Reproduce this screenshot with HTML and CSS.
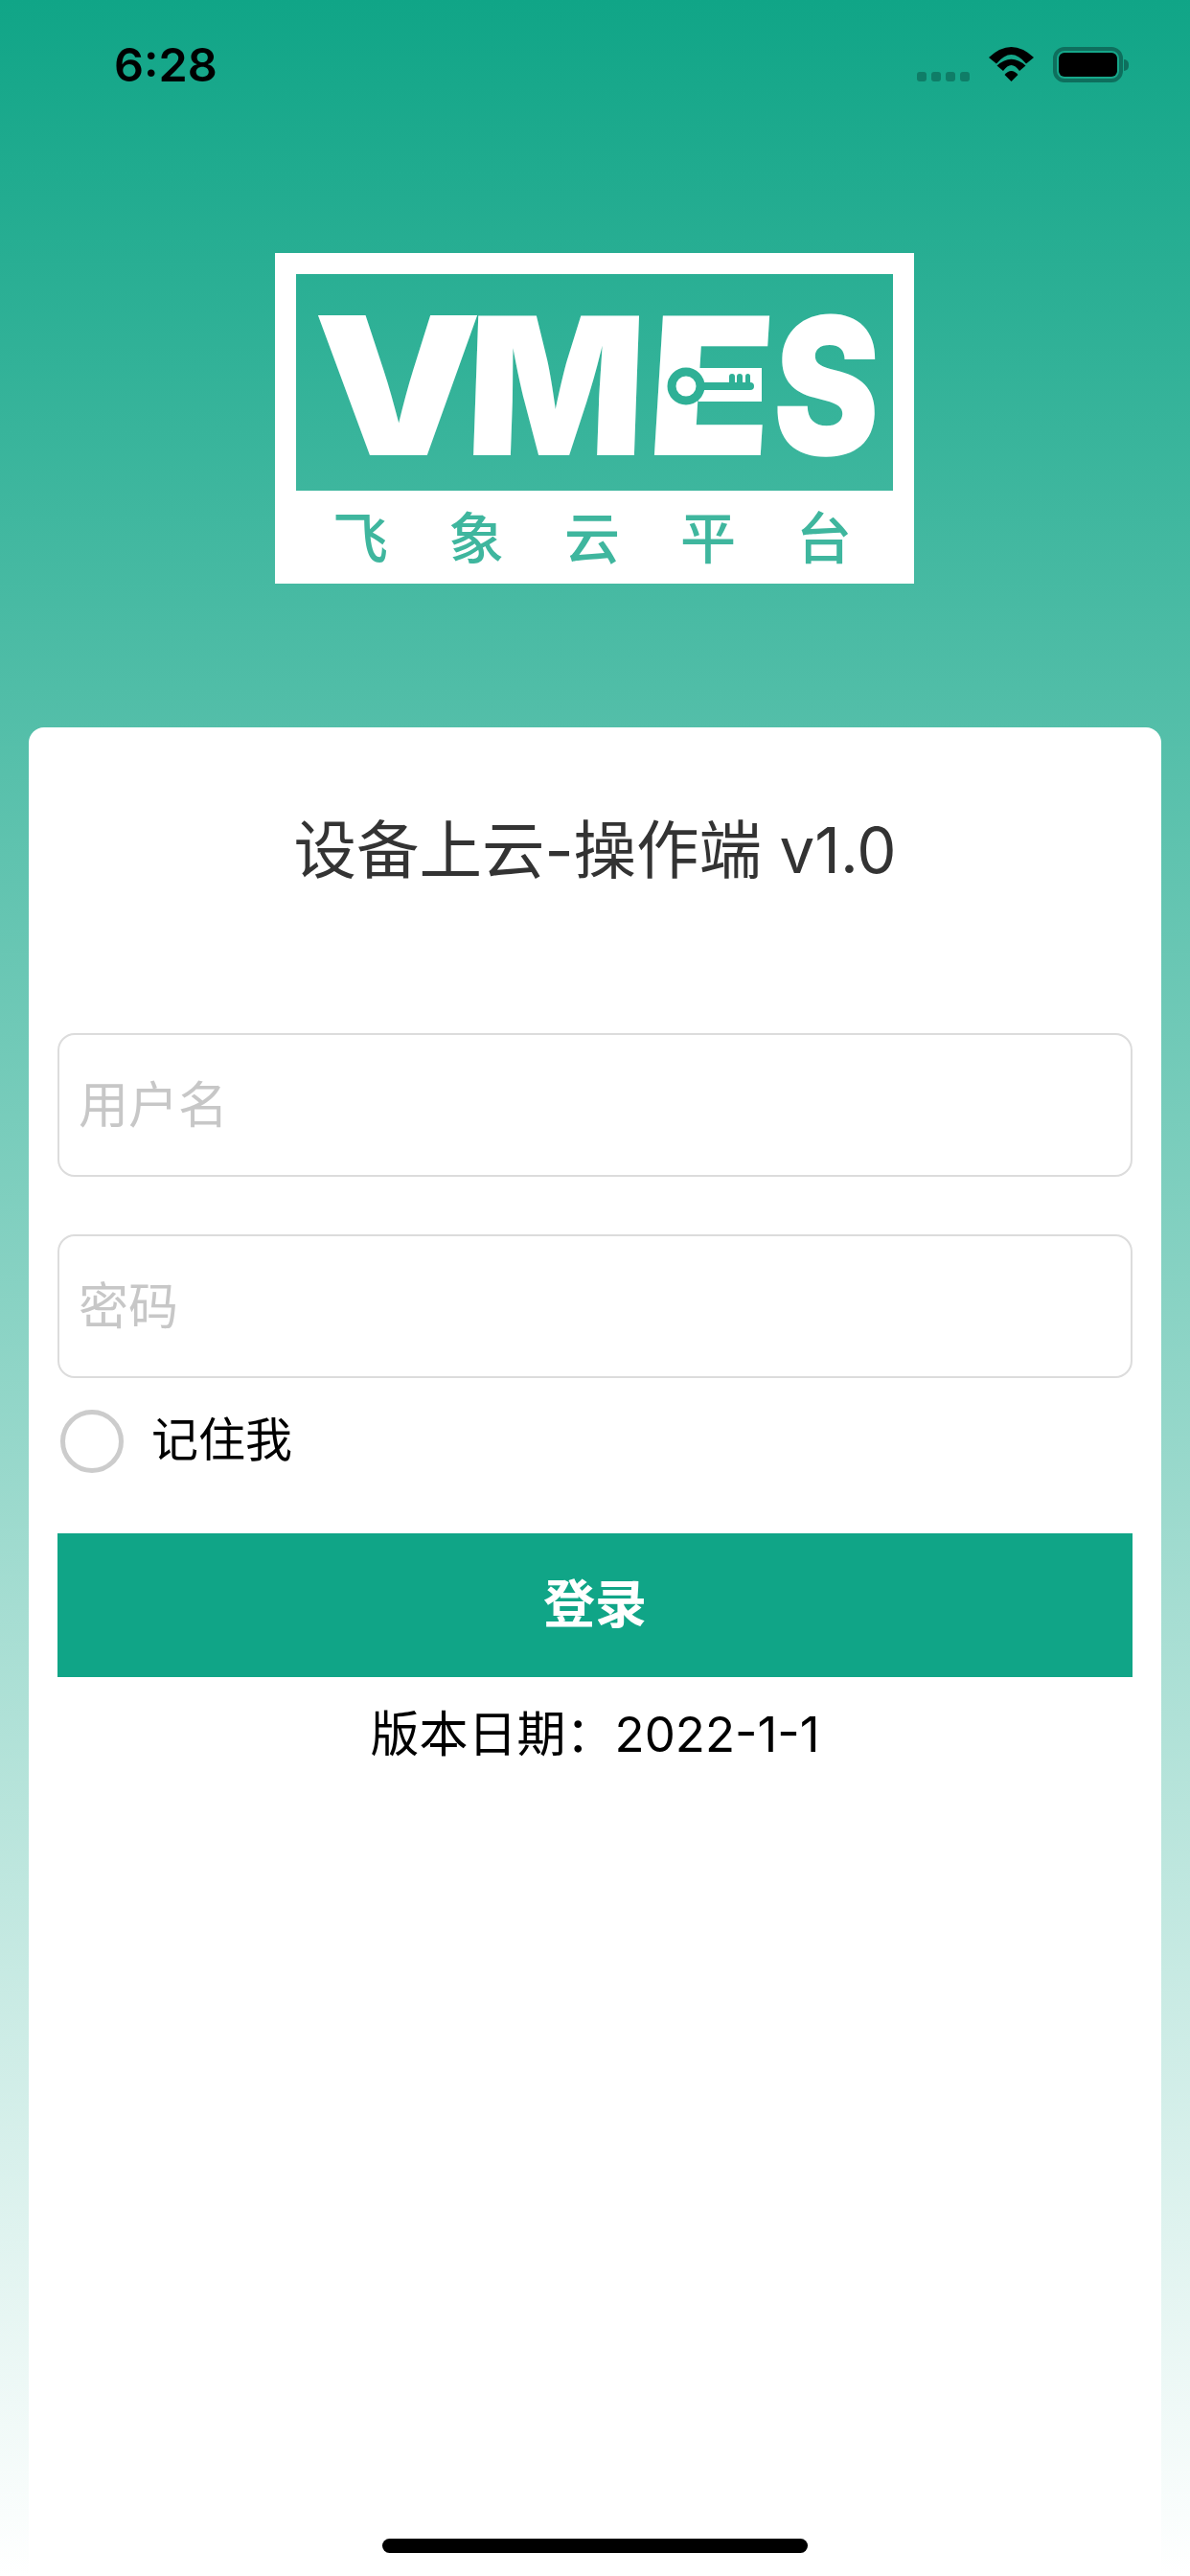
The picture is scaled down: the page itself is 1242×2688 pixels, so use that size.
FILE: index.html
```html
<!DOCTYPE html>
<html lang="zh-CN">
<head>
  <meta charset="UTF-8">
  <title>设备上云-操作端</title>
  <meta name="viewport" content="width=device-width, initial-scale=1.0">
  <link rel="stylesheet" href="styles.css">
</head>
<body>
  <!-- status bar -->
  <div class="status-bar">
    <span class="status-time">6:28</span>
    <div class="status-icons">
      <div class="signal"><i></i><i></i><i></i><i></i></div>
      <svg class="wifi" width="47" height="36" viewBox="0 0 47 36">
        <path d="M0 11Q23.5 -11 47 11L39 17.5Q23.5 -1.5 8 17.5Z"/>
        <path d="M8.5 19.5Q23.5 6 38.5 19.5L32 25Q23.5 13 15 25Z"/>
        <path d="M16.5 29Q23.5 21 30.5 29L23.5 36Z"/>
      </svg>
      <div class="battery"><div class="battery-level"></div></div>
      <div class="battery-nub"></div>
    </div>
  </div>

  <!-- logo -->
  <div class="logo">
    <svg class="logo-mark" width="623" height="226" viewBox="0 0 623 226">
      <text class="logo-letter" x="18" y="189" textLength="176" lengthAdjust="spacingAndGlyphs">V</text>
      <text class="logo-letter" transform="translate(176 189) skewX(-2)" textLength="186" lengthAdjust="spacingAndGlyphs">M</text>
      <text class="logo-letter" transform="translate(364 189) skewX(-3.5)" textLength="130" lengthAdjust="spacingAndGlyphs">E</text>
      <text class="logo-letter" transform="translate(496 189) skewX(-2)" textLength="111" lengthAdjust="spacingAndGlyphs">S</text>
      <!-- key in the middle arm of the E -->
      <rect x="420" y="98" width="66" height="35" fill="#fff"/>
      <g class="logo-key">
        <circle cx="407" cy="117" r="15" fill="#fff" stroke-width="9"/>
        <path d="M423 113H474Q478 113 478 117Q478 121 474 121H423Z"/>
        <rect x="452" y="104" width="6" height="12" rx="3"/>
        <rect x="460" y="104" width="6" height="12" rx="3"/>
        <rect x="469" y="104" width="5" height="12" rx="2.5"/>
      </g>
    </svg>
    <div class="logo-name">
      <span>飞</span><span>象</span><span>云</span><span>平</span><span>台</span>
    </div>
  </div>

  <!-- login card -->
  <div class="card">
    <h1>设备上云-操作端 v1.0</h1>
    <form class="login-form">
      <input type="text" placeholder="用户名">
      <input type="password" placeholder="密码">
      <label class="remember">
        <input type="radio" name="remember">
        <span class="remember-text">记住我</span>
      </label>
      <button type="button">登录</button>
    </form>
    <div class="version">版本日期：2022-1-1</div>
  </div>

  <div class="home-indicator"></div>
</body>
</html>
```

FILE: styles.css
```css
* {
  box-sizing: border-box;
}
html, body {
  margin: 0;
  padding: 0;
}
body {
  position: relative;
  display: flex;
  flex-direction: column;
  width: 1242px;
  height: 2688px;
  overflow: hidden;
  background: linear-gradient(#10a587, #fff);
  font-family: Inter, "Noto Sans CJK SC", sans-serif;
}

/* status bar */
.status-bar {
  display: flex;
  justify-content: space-between;
  align-items: flex-start;
  height: 264px;
  padding: 38px 64px 0 119px;
}
.status-time {
  font-size: 48.5px;
  font-weight: 600;
  line-height: 60px;
  color: #000;
}
.status-icons {
  display: flex;
  align-items: flex-start;
  padding-top: 11px;
}
.signal {
  display: flex;
  gap: 5px;
  margin: 26px 20px 0 0;
}
.signal i {
  display: block;
  width: 10px;
  height: 10px;
  border-radius: 3px;
  background: #0f7d67;
}
.wifi {
  fill: #000;
  margin-right: 20px;
}
.battery {
  width: 73px;
  height: 37px;
  padding: 2px;
  border: 4px solid #0e6f5d;
  border-radius: 12px;
}
.battery-level {
  width: 100%;
  height: 100%;
  border-radius: 6px;
  background: #000;
}
.battery-nub {
  width: 5px;
  height: 12px;
  margin: 13px 0 0 1px;
  border-radius: 0 6px 6px 0;
  background: #0e6f5d;
}

/* logo */
.logo {
  width: 667px;
  height: 345px;
  margin-left: 287px;
  border: 22px solid #fff;
  border-bottom: 0;
}
.logo-mark {
  display: block;
  overflow: visible;
}
.logo-letter {
  font-family: Inter, sans-serif;
  font-size: 200px;
  font-weight: 900;
  fill: #fff;
}
.logo-key {
  fill: #2fb096;
  stroke: none;
}
.logo-key circle {
  stroke: #2fb096;
}
.logo-name {
  display: flex;
  gap: 63px;
  align-items: center;
  height: 97px;
  padding: 3px 0 0 38px;
  background: #fff;
  font-size: 58px;
  font-weight: 500;
  line-height: 1;
  color: #3fb69e;
}

/* card */
.card {
  flex: 1;
  margin: 150px 30px 0;
  padding: 84px 30px 0;
  border-radius: 16px 16px 0 0;
  background: #fff;
}
h1 {
  margin: 0;
  font-size: 65.5px;
  font-weight: 400;
  line-height: 90px;
  text-align: center;
  color: #333;
}
.login-form {
  display: flex;
  flex-direction: column;
  margin-top: 145px;
}
.login-form input[type="text"],
.login-form input[type="password"] {
  width: 100%;
  height: 150px;
  margin-bottom: 60px;
  padding: 0 20px;
  border: 2px solid #dcdcdc;
  border-radius: 18px;
  outline: none;
  font-family: inherit;
  font-size: 52px;
}
.login-form input::placeholder {
  color: #c7c7c7;
}
.login-form input[type="password"] {
  margin-bottom: 32px;
}
.remember {
  display: flex;
  align-items: center;
  gap: 29px;
  height: 67px;
  padding-left: 3px;
  font-size: 49px;
  color: #000;
}
.remember-text {
  position: relative;
  top: -5px;
}
.remember input {
  appearance: none;
  width: 66px;
  height: 66px;
  margin: 0;
  border: 5px solid #ccc;
  border-radius: 50%;
}
button {
  height: 150px;
  margin-top: 63px;
  padding-bottom: 10px;
  border: none;
  background: #10a587;
  font-family: inherit;
  font-size: 54px;
  font-weight: 700;
  color: #fff;
}
.version {
  margin-top: 30px;
  font-size: 51px;
  line-height: 60px;
  text-align: center;
  color: #000;
}

.home-indicator {
  position: absolute;
  left: 399px;
  top: 2649px;
  width: 444px;
  height: 15px;
  border-radius: 8px;
  background: #000;
}
```
